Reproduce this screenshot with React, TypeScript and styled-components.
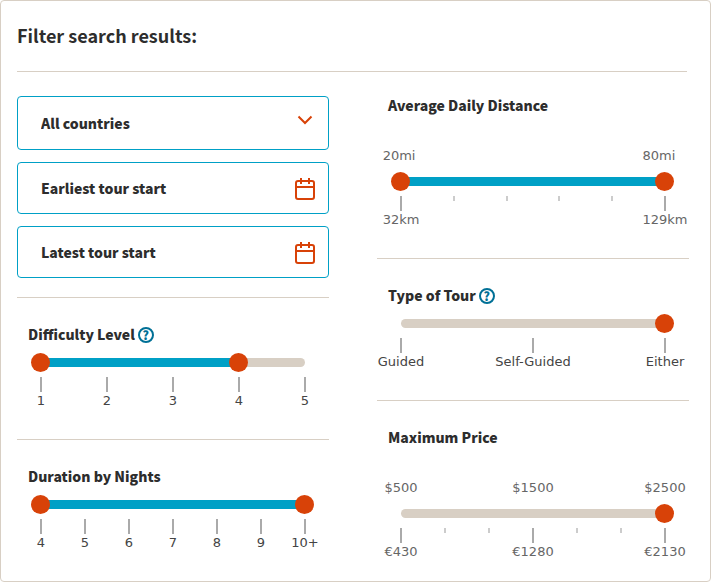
import React, { useId, useState } from "react";
import styled, { createGlobalStyle } from "styled-components";

const color = {
  ink: "#2d2d2d",
  border: "#d8cfc4",
  field: "#00a0c6",
  accent: "#d84208",
  help: "#007096",
};
const heading = '"Noto Sans CJK SC", sans-serif';
const numeric = '"DejaVu Sans", Verdana, sans-serif';

const GlobalStyle = createGlobalStyle`
  *, *::before, *::after { box-sizing: border-box; }
  body { margin: 0; background: #fff; color: ${color.ink}; font-family: ${heading}; }
`;

const Card = styled.form`
  border: 1px solid ${color.border};
  border-radius: 4px;
  padding: 0 21px 0 16px;
  background: #fff;
`;

const Header = styled.header`
  margin: 0 2px 24px 0;
  padding: 19px 0 20px;
  border-bottom: 1px solid ${color.border};
`;

const Title = styled.h1`
  margin: 0;
  font-size: 18px;
  line-height: 31px;
  font-weight: 700;
`;

const Columns = styled.div`
  display: grid;
  grid-template-columns: 1fr 1fr;
  column-gap: 48px;
  align-items: start;
`;

const Column = styled.div`
  min-width: 0;
`;

const Fields = styled.div`
  display: grid;
  gap: 12px;
  margin-bottom: 19px;
`;

const Field = styled.div<{ $tall?: boolean }>`
  display: grid;
  align-items: center;
  height: ${(p) => (p.$tall ? 54 : 52)}px;

  > * { grid-area: 1 / 1; }
  > svg { justify-self: end; pointer-events: none; }
`;

const fieldBox = `
  width: 100%;
  height: 100%;
  margin: 0;
  padding: 0 56px 0 23px;
  border: 1px solid ${color.field};
  border-radius: 4px;
  background: #fff;
  color: ${color.ink};
  font: 900 14px/24px ${heading};
`;

const Select = styled.select`
  ${fieldBox}
  appearance: none;
`;

const DateInput = styled.input`
  ${fieldBox}
  &::placeholder { color: ${color.ink}; opacity: 1; }
`;

const Chevron = styled.svg`
  margin: 0 16px 6px 0;
`;

const Calendar = styled.svg`
  margin: 2px 14px 0 0;
`;

const Section = styled.section<{ $first?: boolean }>`
  min-height: ${(p) => (p.$first ? 0 : 142)}px;
  padding-top: ${(p) => (p.$first ? 0 : 27)}px;
  padding-bottom: ${(p) => (p.$first ? 30 : 0)}px;
  border-top: ${(p) => (p.$first ? 0 : 1)}px solid ${color.border};
`;

const SectionHead = styled.div`
  display: flex;
  align-items: flex-end;
  gap: 3px;
  height: 18px;
  padding-left: 11px;
`;

const SectionTitle = styled.h2`
  margin: 0;
  font-size: 14px;
  line-height: 18px;
  font-weight: 900;
`;

const HelpButton = styled.button`
  display: flex;
  align-items: center;
  justify-content: center;
  width: 16px;
  height: 16px;
  padding: 0;
  border: 2px solid ${color.help};
  border-radius: 50%;
  background: none;
  color: ${color.help};
  font: 900 12px/12px ${heading};
`;

/* Scale marks and slider share one grid cell, so the slider sits between the two label rows. */
const SliderArea = styled.div<{ $labelsAbove: boolean }>`
  display: grid;
  align-items: start;
  margin-top: ${(p) => (p.$labelsAbove ? 34 : 10)}px;
  > * { grid-area: 1 / 1; }
`;

const Marks = styled.div`
  display: flex;
  justify-content: space-between;
  margin: 0 24px;
`;

const Mark = styled.div`
  display: flex;
  justify-content: center;
  width: 0;
`;

const MarkBody = styled.div<{ $labelsAbove: boolean }>`
  flex: none;
  display: grid;
  grid-template-columns: max-content;
  grid-template-rows: ${(p) => (p.$labelsAbove ? "16px 32px" : "0 24px")} 16px 16px;
`;

const MarkLabel = styled.span<{ $row: number; $soft: boolean }>`
  grid-row: ${(p) => p.$row};
  color: ${(p) => (p.$soft ? "#666" : "#444")};
  font: 13px/16px ${numeric};
`;

const Tick = styled.span<{ $minor?: boolean }>`
  grid-row: 3;
  justify-self: center;
  width: 2px;
  height: ${(p) => (p.$minor ? 5 : 15)}px;
  background: ${(p) => (p.$minor ? "#ccc" : "#aaa")};
`;

const SliderStack = styled.div<{ $labelsAbove: boolean }>`
  display: grid;
  align-items: center;
  height: 19px;
  margin: ${(p) => (p.$labelsAbove ? 24 : 0)}px 15px 0 14px;
  > * { grid-area: 1 / 1; }
`;

const Track = styled.div`
  height: 9px;
  margin: 0 9px 0 10px;
  border-radius: 5px;
  overflow: hidden;
  background: ${color.border};
`;

const Fill = styled.div`
  height: 100%;
  background: ${color.field};
`;

const Range = styled.input`
  appearance: none;
  width: 100%;
  height: 19px;
  margin: 0;
  background: transparent;
  pointer-events: none;

  &::-webkit-slider-thumb {
    appearance: none;
    width: 19px;
    height: 19px;
    border: 0;
    border-radius: 50%;
    background: ${color.accent};
    pointer-events: auto;
    cursor: pointer;
  }
  &::-moz-range-thumb {
    width: 19px;
    height: 19px;
    border: 0;
    border-radius: 50%;
    background: ${color.accent};
    pointer-events: auto;
  }
`;

type MarkData = { above?: string; below?: string };

type SliderProps = {
  title: string;
  help?: boolean;
  first?: boolean;
  soft?: boolean;
  min: number;
  max: number;
  initial: number[];
  step?: number;
  marks: MarkData[];
};

function SliderSection({ title, help, first, soft = false, min, max, initial, step = 1, marks }: SliderProps) {
  const id = useId();
  const [values, setValues] = useState(initial);
  const labelsAbove = marks.some((m) => m.above);
  const percent = (v: number) => ((v - min) / (max - min)) * 100;

  const change = (index: number, next: number) =>
    setValues((old) => {
      const copy = [...old];
      copy[index] = next;
      return copy.length === 2 && copy[0] > copy[1] ? old : copy;
    });

  return (
    <Section $first={first} aria-labelledby={id}>
      <SectionHead>
        <SectionTitle id={id}>{title}</SectionTitle>
        {help && <HelpButton type="button" aria-label={`About ${title}`}>?</HelpButton>}
      </SectionHead>
      <SliderArea $labelsAbove={labelsAbove}>
        <Marks>
          {marks.map((m, i) => (
            <Mark key={i}>
              <MarkBody $labelsAbove={labelsAbove}>
                {m.above && <MarkLabel $row={1} $soft={soft}>{m.above}</MarkLabel>}
                <Tick $minor={!m.below} />
                {m.below && <MarkLabel $row={4} $soft={soft}>{m.below}</MarkLabel>}
              </MarkBody>
            </Mark>
          ))}
        </Marks>
        <SliderStack $labelsAbove={labelsAbove}>
          <Track>
            {values.length === 2 && (
              <Fill
                style={{
                  marginLeft: `${percent(values[0])}%`,
                  width: `${percent(values[1]) - percent(values[0])}%`,
                }}
              />
            )}
          </Track>
          {values.map((v, i) => (
            <Range
              key={i}
              type="range"
              min={min}
              max={max}
              step={step}
              value={v}
              aria-labelledby={id}
              onChange={(e) => change(i, Number(e.target.value))}
            />
          ))}
        </SliderStack>
      </SliderArea>
    </Section>
  );
}

function DateField({ label }: { label: string }) {
  return (
    <Field>
      <DateInput type="text" placeholder={label} aria-label={label} />
      <Calendar width="20" height="22" viewBox="0 0 20 22" fill="none" stroke={color.accent} strokeWidth="2" aria-hidden="true">
        <rect x="1" y="3" width="18" height="18" rx="2" />
        <path d="M6 0v6M14 0v6M1 9h18" />
      </Calendar>
    </Field>
  );
}

const labels = (...texts: string[]): MarkData[] => texts.map((below) => ({ below }));

export default function App() {
  return (
    <>
      <GlobalStyle />
      <Card>
        <Header>
          <Title>Filter search results:</Title>
        </Header>
        <Columns>
          <Column>
            <Fields>
              <Field $tall>
                <Select aria-label="Country">
                  <option>All countries</option>
                </Select>
                <Chevron width="16" height="10" viewBox="0 0 16 10" fill="none" stroke={color.accent} strokeWidth="2" aria-hidden="true">
                  <path d="M1.5 1.5 8 8l6.5-6.5" />
                </Chevron>
              </Field>
              <DateField label="Earliest tour start" />
              <DateField label="Latest tour start" />
            </Fields>
            <SliderSection title="Difficulty Level" help min={1} max={5} initial={[1, 4]} marks={labels("1", "2", "3", "4", "5")} />
            <SliderSection title="Duration by Nights" min={4} max={10} initial={[4, 10]} marks={labels("4", "5", "6", "7", "8", "9", "10+")} />
          </Column>
          <Column>
            <SliderSection
              title="Average Daily Distance"
              first
              soft
              min={20}
              max={80}
              initial={[20, 80]}
              marks={[{ above: "20mi", below: "32km" }, {}, {}, {}, {}, { above: "80mi", below: "129km" }]}
            />
            <SliderSection title="Type of Tour" help min={0} max={2} initial={[2]} marks={labels("Guided", "Self-Guided", "Either")} />
            <SliderSection
              title="Maximum Price"
              soft
              min={500}
              max={2500}
              step={100}
              initial={[2500]}
              marks={[
                { above: "$500", below: "€430" },
                {},
                {},
                { above: "$1500", below: "€1280" },
                {},
                {},
                { above: "$2500", below: "€2130" },
              ]}
            />
          </Column>
        </Columns>
      </Card>
    </>
  );
}
